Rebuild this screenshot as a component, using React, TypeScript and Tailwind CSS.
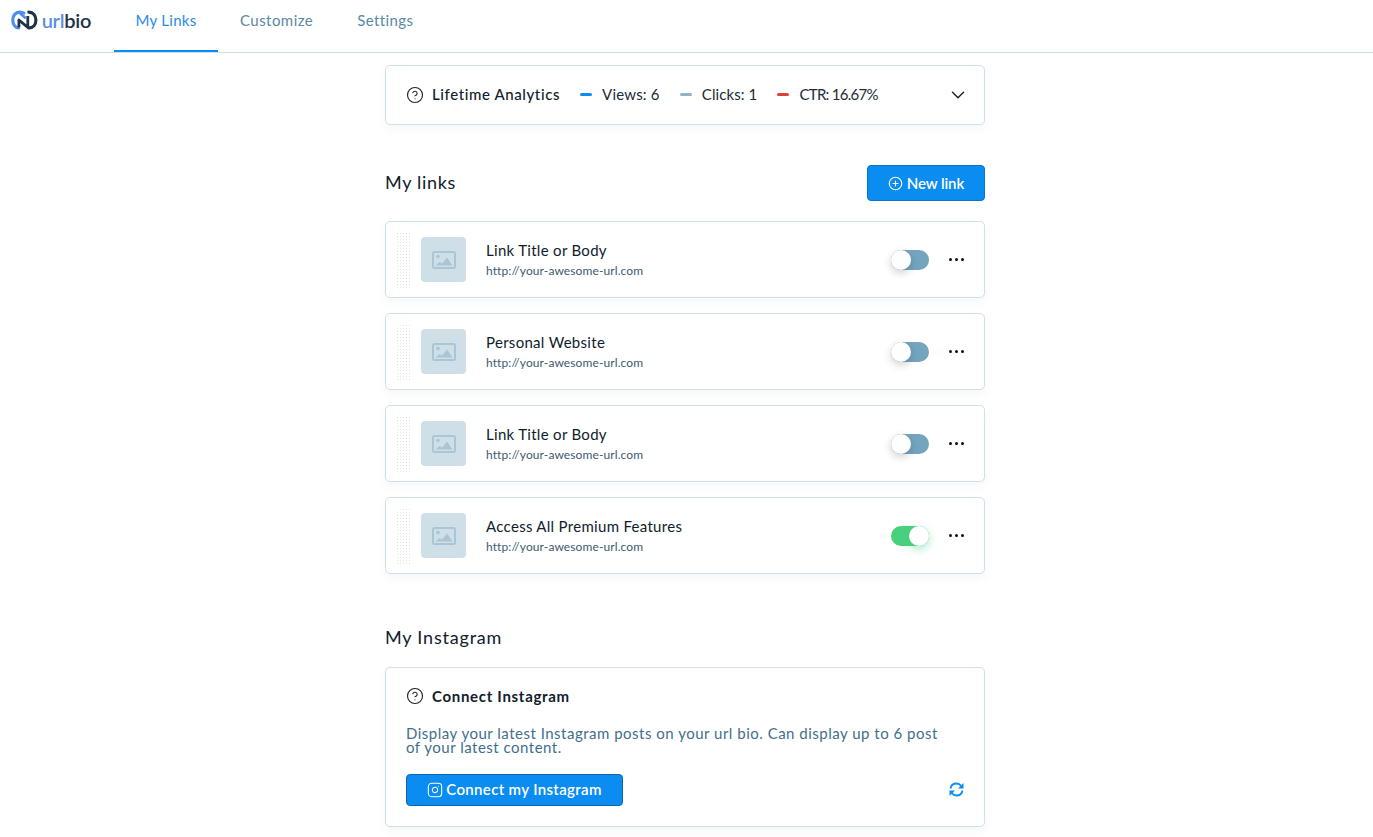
import { ChevronDown, CirclePlus, CircleHelp, Instagram } from 'lucide-react';

const links = [
  { title: 'Link Title or Body', on: false },
  { title: 'Personal Website', on: false },
  { title: 'Link Title or Body', on: false },
  { title: 'Access All Premium Features', on: true },
];

function Logo() {
  return (
    <div className="flex w-[80px] items-center">
      <svg width="27" height="20" viewBox="0 0 27 20" fill="none" className="mr-[4px]">
        <path d="M13 3L9 2C4.500 2 1.800 5.500 1.800 10S4.500 18 7.500 18" stroke="#4d8ff0" strokeWidth="3.200" strokeLinecap="round" />
        <path d="M9 3l5 4.500" stroke="#4d8ff0" strokeWidth="2.800" strokeLinecap="round" />
        <path d="M18 2c4.500.3 7.200 3.500 7.200 8s-2.700 8-7.200 8" stroke="#1f3347" strokeWidth="3.200" strokeLinecap="round" />
        <path d="M8 17.500V10l9 7.500L17 6" stroke="#1f3347" strokeWidth="2.800" strokeLinejoin="round" />
      </svg>
      <span className="text-[20px] leading-none font-semibold tracking-[-0.3px] text-[#5b8fe6]">url</span>
      <span className="text-[20px] leading-none font-semibold tracking-[-0.3px] text-[#1f3347]">bio</span>
    </div>
  );
}

function PhotoIcon() {
  return (
    <svg width="24" height="18" viewBox="0 0 24 18" fill="none">
      <rect x="1" y="1" width="22" height="16" rx="1.500" stroke="#aac6d6" strokeWidth="2" />
      <circle cx="6" cy="5.500" r="1.800" fill="#aac6d6" />
      <path d="M3.500 14.500l4-3.500 2.500 1.500 5-6 5.500 8z" fill="#aac6d6" />
    </svg>
  );
}

function SyncIcon() {
  return (
    <svg width="15" height="15" viewBox="0 0 15 15" fill="none">
      <path d="M1.500 6.500C2 3.500 4.300 1.500 7.500 1.500c2 0 3.500 .8 4.500 2.200" stroke="#0a8cf0" strokeWidth="1.800" />
      <path d="M13.500 8.500c-.5 3-2.800 5-6 5-2 0-3.500-.8-4.500-2.200" stroke="#0a8cf0" strokeWidth="1.800" />
      <path d="M14.500 1v5.500H9z" fill="#0a8cf0" />
      <path d="M.5 14V8.500H6z" fill="#0a8cf0" />
    </svg>
  );
}

function Stat({ color, label, className }: { color: string; label: string; className: string }) {
  return (
    <div className="flex items-center gap-[10px]">
      <span className={`h-[3px] w-[12px] rounded-full ${color}`} />
      <span className={`text-[15px] text-[#1c2b36] ${className}`}>{label}</span>
    </div>
  );
}

function LinkRow({ title, on }: { title: string; on: boolean }) {
  return (
    <div className="flex h-[77px] items-center rounded-[5px] border border-[#cfe0ea] bg-white pl-[10px] pr-[20px] shadow-[0_4px_10px_rgba(30,80,120,0.05)]">
      <div className="h-[56px] w-[15px] bg-[radial-gradient(#e2e2e2_0.7px,transparent_0.8px)] bg-[length:3px_3px]" />
      <div className="ml-[10px] flex h-[45px] w-[45px] items-center justify-center rounded-[4px] bg-[#cfdfe8]">
        <PhotoIcon />
      </div>
      <div className="ml-[20px] flex-1">
        <div className="text-[15px] leading-[20px] tracking-[0.3px] text-[#10202c]">{title}</div>
        <div className="mt-[3px] text-[12px] leading-[16px] tracking-[0.1px] text-[#3d5a70]">http://your-awesome-url.com</div>
      </div>
      <div className={`relative h-[20px] w-[38px] rounded-full ${on ? 'bg-[#48d07f]' : 'bg-[#74a5bf]'}`}>
        <span
          className={`absolute top-0 h-[20px] w-[20px] rounded-full bg-white ${
            on ? 'right-0 shadow-[0_3px_8px_rgba(72,208,127,0.5)]' : 'left-0 shadow-[0_3px_8px_rgba(0,0,0,0.2)]'
          }`}
        />
      </div>
      <div className="ml-[20px] flex gap-[3px]">
        <span className="h-[3px] w-[3px] rounded-full bg-[#111]" />
        <span className="h-[3px] w-[3px] rounded-full bg-[#111]" />
        <span className="h-[3px] w-[3px] rounded-full bg-[#111]" />
      </div>
    </div>
  );
}

export default function App() {
  return (
    <div className="min-h-[837px] bg-white font-['Lato',sans-serif]">
      <header className="flex h-[53px] items-start border-b border-[#c9e0ec] pl-[11px]">
        <div className="flex h-[40px] items-center">
          <Logo />
        </div>
        <nav className="ml-[23px] flex h-[52px]">
          <a className="flex w-[104px] justify-center border-b-2 border-[#0a8cf0] pt-[9px] text-[15px] tracking-[0.3px] text-[#2a8bea]">My Links</a>
          <a className="ml-[22px] pt-[9px] text-[15px] tracking-[0.45px] text-[#5a88a6]">Customize</a>
          <a className="ml-[44px] pt-[9px] text-[15px] tracking-[0.4px] text-[#5a88a6]">Settings</a>
        </nav>
      </header>

      <div className="pr-[3px]">
        <main className="mx-auto w-[600px] pt-[12px]">
          <section className="flex h-[60px] items-center rounded-[5px] border border-[#cfe0ea] bg-white pl-[20px] pr-[15px] shadow-[0_4px_10px_rgba(30,80,120,0.05)]">
            <CircleHelp size={18} strokeWidth={1.5} className="text-[#222]" />
            <span className="ml-[8px] pb-[1px] text-[15px] font-medium tracking-[0.6px] text-[#10202c]">Lifetime Analytics</span>
            <div className="ml-[20px] flex flex-1 gap-[20px] pb-[1px]">
              <Stat color="bg-[#0a8cf0]" label="Views: 6" className="tracking-[0.2px]" />
              <Stat color="bg-[#8fb2c8]" label="Clicks: 1" className="tracking-[0.1px]" />
              <Stat color="bg-[#e0403a]" label="CTR: 16.67%" className="tracking-[-0.7px]" />
            </div>
            <ChevronDown size={22} strokeWidth={1.6} className="text-[#222]" />
          </section>

          <div className="mt-[40px] flex h-[36px] items-center justify-between">
            <h2 className="pb-[2px] text-[18px] tracking-[0.7px] text-[#10202c]">My links</h2>
            <button className="flex h-[36px] w-[118px] items-center justify-center gap-[4px] rounded-[4px] border border-[#0a74c8] bg-[#0a8cf0] text-[15px] font-semibold tracking-[-0.1px] text-white">
              <CirclePlus size={15} strokeWidth={1.75} />
              New link
            </button>
          </div>

          <div className="mt-[20px] flex flex-col gap-[15px]">
            {links.map((link, i) => (
              <LinkRow key={i} title={link.title} on={link.on} />
            ))}
          </div>

          <h2 className="mt-[51px] text-[18px] leading-[24px] tracking-[0.8px] text-[#10202c]">My Instagram</h2>

          <section className="mt-[18px] h-[160px] rounded-[5px] border border-[#cfe0ea] bg-white px-[20px] pt-[17px] shadow-[0_4px_10px_rgba(30,80,120,0.05)]">
            <div className="flex items-center">
              <CircleHelp size={18} strokeWidth={1.5} className="text-[#222]" />
              <span className="ml-[8px] text-[15px] font-bold tracking-[0.7px] text-[#10202c]">Connect Instagram</span>
            </div>
            <p className="mt-[18px] w-[540px] text-[15px] leading-[14px] tracking-[0.5px] text-[#3f6f8c]">
              Display your latest Instagram posts on your url bio. Can display up to 6 post of your latest content.
            </p>
            <div className="mt-[20px] flex items-center justify-between">
              <button className="flex h-[32px] w-[217px] items-center justify-center gap-[3px] rounded-[4px] border border-[#0a66b0] bg-[#0a8cf0] text-[15px] font-semibold tracking-[0.35px] text-white">
                <Instagram size={16} strokeWidth={1.6} />
                Connect my Instagram
              </button>
              <SyncIcon />
            </div>
          </section>
        </main>
      </div>
    </div>
  );
}
